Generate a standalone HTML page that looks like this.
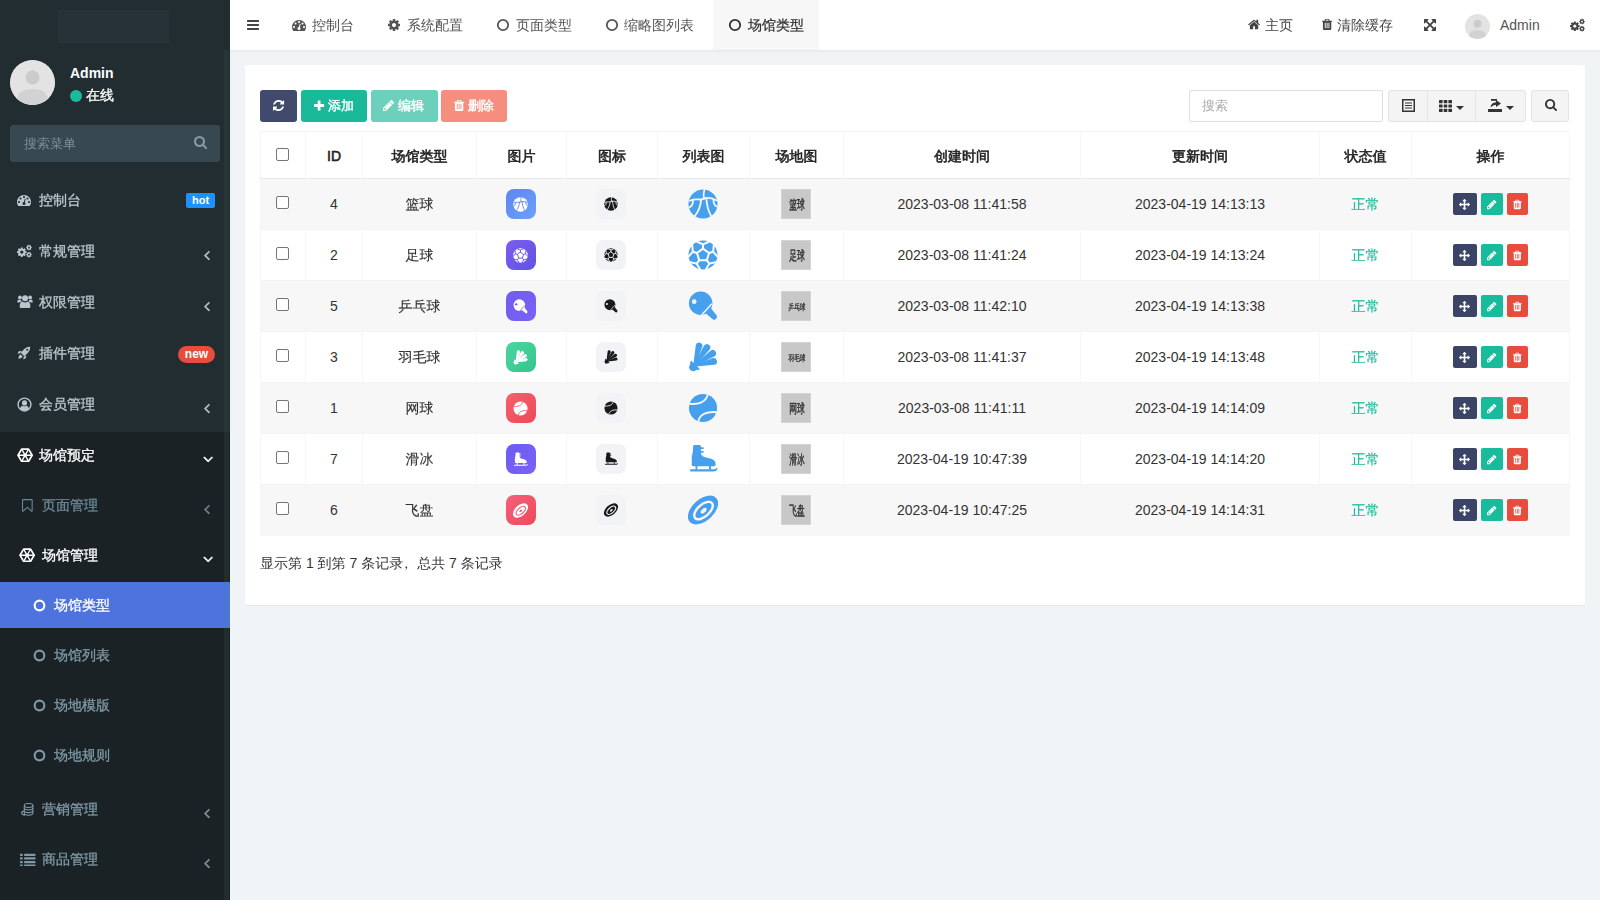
<!DOCTYPE html>
<html lang="zh-CN">
<head>
<meta charset="utf-8">
<title>场馆类型</title>
<style>
*{box-sizing:border-box;}
html,body{margin:0;padding:0;}
body{width:1600px;height:900px;overflow:hidden;background:#f1f4f6;font-family:"Liberation Sans","WenQuanYi Zen Hei","Noto Sans CJK SC",sans-serif;font-size:14px;color:#333;line-height:20px;position:relative;}
svg{display:block;}
/* ---------- sidebar ---------- */
#sidebar{position:absolute;left:0;top:0;width:230px;height:900px;background:#222d32;color:#b8c7ce;}
#logo{position:absolute;left:58px;top:10px;width:111px;height:33px;background:#263138;}
#avatar{position:absolute;left:10px;top:60px;width:45px;height:45px;border-radius:50%;background:#dcdcdc;overflow:hidden;}
#uname{position:absolute;left:70px;top:62.5px;color:#fff;font-weight:bold;font-size:14px;line-height:20px;}
#ustat{position:absolute;left:70px;top:85px;-webkit-text-stroke:.3px #fff;color:#fff;font-size:14px;line-height:20px;}
#ustat i{display:inline-block;width:12px;height:12px;border-radius:50%;background:#18bc9c;margin-right:4px;vertical-align:-1.5px;}
#sform{position:absolute;left:10px;top:125px;width:210px;height:37px;background:#374850;border-radius:3px;color:#7e8e96;font-size:13px;line-height:37px;padding-left:14px;}
#sform svg{position:absolute;right:13px;top:12px;}
.mi{position:absolute;left:0;width:230px;height:51px;color:#b8c7ce;font-size:14px;}
.mi .ic{position:absolute;left:17px;top:18px;width:16px;height:16px;}
.mi .tx{position:absolute;left:39px;top:15px;line-height:20px;white-space:nowrap;-webkit-text-stroke:.3px currentColor;}
.mi .ar{position:absolute;left:204px;top:21px;}
.mi.sub .ic{left:20px;}
.mi.sub .tx{left:42px;}
.mi.sub2 .ic{left:33px;}
.mi.sub2 .tx{left:54px;}
.mi.dim{color:#7f99a5;}
.mi.dim2{color:#6b8795;}
.mi.wh{color:#fff;}
#subbg{position:absolute;left:0;top:432px;width:230px;height:468px;background:#1a2226;}
#actbg{position:absolute;left:0;top:582px;width:230px;height:46px;background:#4e73df;}
.lab{position:absolute;font-size:11px;font-weight:bold;color:#fff;line-height:12px;text-align:center;}
/* ---------- header ---------- */
#header{position:absolute;left:230px;top:0;width:1370px;height:51px;background:#fff;border-bottom:1px solid #e6eaee;box-shadow:0 1px 2px rgba(0,0,0,.03);}
.tab{position:absolute;top:0;height:50px;line-height:50px;color:#555;font-size:14px;white-space:nowrap;}
.tab svg{position:absolute;top:18px;}
#tabact{position:absolute;left:482.5px;top:0;width:106px;height:50px;background:#f7f7f8;}
/* ---------- panel ---------- */
#panel{position:absolute;left:245px;top:65px;width:1340px;height:540px;background:#fff;border-radius:3px;box-shadow:0 1px 1px rgba(0,0,0,.05);}
.btn{position:absolute;top:90px;height:32px;border-radius:3px;color:#fff;-webkit-text-stroke:.4px #fff;font-size:13px;line-height:32px;white-space:nowrap;}
.btn svg{position:absolute;}
#search{position:absolute;left:1189px;top:90px;width:194px;height:32px;border:1px solid #dcdfe2;border-radius:2px;background:#fff;color:#aaa;font-size:13px;line-height:30px;padding-left:12px;}
.gbtn{position:absolute;top:90px;height:32px;background:#f4f4f4;border:1px solid #e3e3e3;}
.gbtn svg{position:absolute;}
/* table */
#tbl{position:absolute;left:260px;top:131px;width:1309px;border-collapse:collapse;table-layout:fixed;font-size:14px;color:#333;}
#tbl th,#tbl td{text-align:center;vertical-align:middle;padding:0;border-left:1px solid #f6f6f6;border-right:1px solid #f6f6f6;}
#tbl th{height:47px;padding-top:2px;font-weight:normal;-webkit-text-stroke:.55px #222;border-top:1px solid #f4f4f4;border-bottom:1px solid #e8e8e8;color:#222;}
#tbl td{height:51px;border-top:1px solid #f4f4f4;padding-top:0;}
#tbl tr.odd td{background:#f7f7f7;}
.cb{display:inline-block;width:13px;height:13px;border:1px solid #767676;border-radius:2px;background:#fff;vertical-align:middle;position:relative;top:-3px;left:-1px;}
#tbl th .cb{top:-3px;}
.ok{color:#18bc9c;}
.ops{display:inline-block;width:75px;height:22px;position:relative;vertical-align:middle;top:0;left:-.5px;}
.ops b{position:absolute;top:0;width:22px;height:22px;border-radius:2px;}
#foot{position:absolute;left:260px;top:553px;font-size:14px;line-height:20px;color:#333;}
.thumb{display:inline-block;width:30px;height:30px;vertical-align:middle;position:relative;overflow:hidden;left:-1px;top:0;}
.ph{position:absolute;left:-15px;top:5px;width:60px;height:20px;line-height:20px;text-align:center;color:#333;white-space:nowrap;}
.ops b svg{margin-left:auto;margin-right:auto;}
#rail{position:absolute;left:224px;top:50px;width:5px;height:850px;background:rgba(90,140,110,.10);}
#tbl td:nth-child(3),#tbl td.ok{-webkit-text-stroke:.15px currentColor;}
</style>
</head>
<body>
<div id="sidebar">
<div id="logo"></div>
<div id="avatar"><svg width="45" height="45" viewBox="0 0 45 45"><circle cx="22.5" cy="22.5" r="22.5" fill="#e3e3e3"/><circle cx="22.5" cy="17.5" r="7" fill="#cbcbcb"/><path d="M7 40 Q8 29 22.5 29 Q37 29 38 40 Q30 45 22.5 45 Q15 45 7 40Z" fill="#d2d2d2"/></svg></div>
<div id="uname">Admin</div>
<div id="ustat"><i></i>在线</div>
<div id="sform">搜索菜单<svg width="13" height="14" viewBox="0 0 1664 1792" style="overflow:visible;position:absolute;left:184px;top:11px"><path fill="#8a9aa2" stroke="#8a9aa2" stroke-width="0" stroke-linejoin="round" d="M1152 704q0-185-131.5-316.5t-316.5-131.5-316.5 131.5-131.5 316.5 131.5 316.5 316.5 131.5 316.5-131.5 131.5-316.5zm512 832q0 52-38 90t-90 38q-54 0-90-38l-343-342q-179 124-399 124-143 0-273.5-55.5t-225-150-150-225-55.5-273.5 55.5-273.5 150-225 225-150 273.5-55.5 273.5 55.5 225 150 150 225 55.5 273.5q0 220-124 399l343 343q37 37 37 90z"/></svg></div>
<div id="subbg"></div><div id="actbg"></div>
<div class="mi " style="top:175px"><span class="ic"><svg width="14" height="14" viewBox="0 0 1792 1792" style="overflow:visible;"><path fill="#b8c7ce" stroke="#b8c7ce" stroke-width="0" stroke-linejoin="round" d="M384 1152q0-53-37.5-90.5t-90.5-37.5-90.5 37.5-37.5 90.5 37.5 90.5 90.5 37.5 90.5-37.5 37.5-90.5zm192-448q0-53-37.5-90.5t-90.5-37.5-90.5 37.5-37.5 90.5 37.5 90.5 90.5 37.5 90.5-37.5 37.5-90.5zm428 481l101-382q6-26-7.5-48.5t-38.5-29.5-48 6.5-30 39.5l-101 382q-60 5-107 43.5t-63 98.5q-20 77 20 146t117 89 146-20 89-117q16-60-6-117t-72-91zm660-33q0-53-37.5-90.5t-90.5-37.5-90.5 37.5-37.5 90.5 37.5 90.5 90.5 37.5 90.5-37.5 37.5-90.5zm-640-640q0-53-37.5-90.5t-90.5-37.5-90.5 37.5-37.5 90.5 37.5 90.5 90.5 37.5 90.5-37.5 37.5-90.5zm448 192q0-53-37.5-90.5t-90.5-37.5-90.5 37.5-37.5 90.5 37.5 90.5 90.5 37.5 90.5-37.5 37.5-90.5zm320 448q0 261-141 483-19 29-54 29h-1402q-35 0-54-29-141-221-141-483 0-182 71-348t191-286 286-191 348-71 348 71 286 191 191 286 71 348z"/></svg></span><span class="tx">控制台</span><span class="lab" style="left:186px;top:18px;width:29px;height:15px;line-height:14px;background:#1e90ff;border-radius:2px">hot</span></div>
<div class="mi " style="top:226px"><span class="ic"><svg width="15" height="14" viewBox="0 0 1920 1792" style=""><g fill="#b8c7ce"><g transform="translate(0,330) scale(0.8)"><path d="M1024 896q0-106-75-181t-181-75-181 75-75 181 75 181 181 75 181-75 75-181zm512-109v222q0 12-8 23t-20 13l-185 28q-19 54-39 91 35 50 107 138 10 12 10 25t-9 23q-27 37-99 108t-94 71q-12 0-26-9l-138-108q-44 23-91 38-16 136-29 186-7 28-36 28h-222q-14 0-24.5-8.5t-11.5-21.5l-28-184q-49-16-90-37l-141 107q-10 9-25 9-14 0-25-11-126-114-165-168-7-10-7-23 0-12 8-23 15-21 51-66.5t54-70.5q-27-50-41-99l-183-27q-13-2-21-12.5t-8-23.5v-222q0-12 8-23t19-13l186-28q14-46 39-92-40-57-107-138-10-12-10-24 0-10 9-23 26-36 98.5-107.5t94.5-71.5q13 0 26 10l138 107q44-23 91-38 16-136 29-186 7-28 36-28h222q14 0 24.5 8.5t11.5 21.5l28 184q49 16 90 37l142-107q9-9 24-9 13 0 25 10 129 119 165 170 7 8 7 22 0 12-8 23-15 21-51 66.5t-54 70.5q26 50 41 98l183 28q13 2 21 12.5t8 23.5z"/></g><g transform="translate(1180,40) scale(0.46)"><path d="M1024 896q0-106-75-181t-181-75-181 75-75 181 75 181 181 75 181-75 75-181zm512-109v222q0 12-8 23t-20 13l-185 28q-19 54-39 91 35 50 107 138 10 12 10 25t-9 23q-27 37-99 108t-94 71q-12 0-26-9l-138-108q-44 23-91 38-16 136-29 186-7 28-36 28h-222q-14 0-24.5-8.5t-11.5-21.5l-28-184q-49-16-90-37l-141 107q-10 9-25 9-14 0-25-11-126-114-165-168-7-10-7-23 0-12 8-23 15-21 51-66.5t54-70.5q-27-50-41-99l-183-27q-13-2-21-12.5t-8-23.5v-222q0-12 8-23t19-13l186-28q14-46 39-92-40-57-107-138-10-12-10-24 0-10 9-23 26-36 98.5-107.5t94.5-71.5q13 0 26 10l138 107q44-23 91-38 16-136 29-186 7-28 36-28h222q14 0 24.5 8.5t11.5 21.5l28 184q49 16 90 37l142-107q9-9 24-9 13 0 25 10 129 119 165 170 7 8 7 22 0 12-8 23-15 21-51 66.5t-54 70.5q26 50 41 98l183 28q13 2 21 12.5t8 23.5z"/></g><g transform="translate(1180,960) scale(0.46)"><path d="M1024 896q0-106-75-181t-181-75-181 75-75 181 75 181 181 75 181-75 75-181zm512-109v222q0 12-8 23t-20 13l-185 28q-19 54-39 91 35 50 107 138 10 12 10 25t-9 23q-27 37-99 108t-94 71q-12 0-26-9l-138-108q-44 23-91 38-16 136-29 186-7 28-36 28h-222q-14 0-24.5-8.5t-11.5-21.5l-28-184q-49-16-90-37l-141 107q-10 9-25 9-14 0-25-11-126-114-165-168-7-10-7-23 0-12 8-23 15-21 51-66.5t54-70.5q-27-50-41-99l-183-27q-13-2-21-12.5t-8-23.5v-222q0-12 8-23t19-13l186-28q14-46 39-92-40-57-107-138-10-12-10-24 0-10 9-23 26-36 98.5-107.5t94.5-71.5q13 0 26 10l138 107q44-23 91-38 16-136 29-186 7-28 36-28h222q14 0 24.5 8.5t11.5 21.5l28 184q49 16 90 37l142-107q9-9 24-9 13 0 25 10 129 119 165 170 7 8 7 22 0 12-8 23-15 21-51 66.5t-54 70.5q26 50 41 98l183 28q13 2 21 12.5t8 23.5z"/></g></g></svg></span><span class="tx">常规管理</span><svg width="5.71" height="16" viewBox="0 0 640 1792" style="overflow:visible;position:absolute;left:204px;top:21px"><path fill="currentColor" stroke="currentColor" stroke-width="70" stroke-linejoin="round" d="M627 544q0 13-10 23l-393 393 393 393q10 10 10 23t-10 23l-50 50q-10 10-23 10t-23-10l-466-466q-10-10-10-23t10-23l466-466q10-10 23-10t23 10l50 50q10 10 10 23z"/></svg></div>
<div class="mi " style="top:277px"><span class="ic"><svg width="16.1" height="15" viewBox="0 0 30 28" style="margin-top:-1px"><g fill="#b8c7ce"><circle cx="15" cy="8" r="5.6"/><path d="M6.5 26 Q5 26 5 23.5 Q5 15 10 14 Q12.5 16 15 16 Q17.5 16 20 14 Q25 15 25 23.5 Q25 26 23.5 26 Z"/><circle cx="5.5" cy="6.5" r="3.6"/><path d="M0.5 15.5 Q0.5 10.5 3.5 10.2 Q5 11.4 7 11.2 Q7.6 13 9 14 Q5.5 15 4.6 16 L2 16 Q0.5 16 0.5 15.5Z"/><circle cx="24.5" cy="6.5" r="3.6"/><path d="M29.5 15.5 Q29.5 10.5 26.5 10.2 Q25 11.4 23 11.2 Q22.4 13 21 14 Q24.5 15 25.4 16 L28 16 Q29.5 16 29.5 15.5Z"/></g></svg></span><span class="tx">权限管理</span><svg width="5.71" height="16" viewBox="0 0 640 1792" style="overflow:visible;position:absolute;left:204px;top:21px"><path fill="currentColor" stroke="currentColor" stroke-width="70" stroke-linejoin="round" d="M627 544q0 13-10 23l-393 393 393 393q10 10 10 23t-10 23l-50 50q-10 10-23 10t-23-10l-466-466q-10-10-10-23t10-23l466-466q10-10 23-10t23 10l50 50q10 10 10 23z"/></svg></div>
<div class="mi " style="top:328px"><span class="ic"><svg width="14" height="14" viewBox="0 0 28 28" style=""><g fill="#b8c7ce"><path d="M26.5 1.5 Q27 8 22 13.5 L14.5 20.5 L7.5 13.5 L14.5 6 Q20 1 26.5 1.5 Z"/><path d="M9.5 9.5 L3.5 10.5 L0.8 15.5 L6.5 14.5 Z"/><path d="M18.5 18.5 L17.5 24.5 L12.5 27.2 L13.5 21.5 Z"/><path d="M6.6 16.4 L11.6 21.4 Q8 25.5 2.4 25.6 Q2.5 20 6.6 16.4Z"/></g><circle cx="20.5" cy="7.5" r="2.2" fill="#222d32"/></svg></span><span class="tx">插件管理</span><span class="lab" style="left:178px;top:18px;width:37px;height:17px;line-height:16px;background:#e74c3c;border-radius:9px;font-size:12px">new</span></div>
<div class="mi " style="top:379px"><span class="ic"><svg width="15" height="15" viewBox="0 0 28 28" style="margin-top:-.5px"><circle cx="14" cy="14" r="12" fill="none" stroke="#b8c7ce" stroke-width="2.6"/><circle cx="14" cy="11" r="4.8" fill="#b8c7ce"/><path d="M5.5 21.5 Q7 16.5 10.5 16.2 Q14 18.5 17.5 16.2 Q21 16.5 22.5 21.5 Q19 25.4 14 25.4 Q9 25.4 5.5 21.5Z" fill="#b8c7ce"/></svg></span><span class="tx">会员管理</span><svg width="5.71" height="16" viewBox="0 0 640 1792" style="overflow:visible;position:absolute;left:204px;top:21px"><path fill="currentColor" stroke="currentColor" stroke-width="70" stroke-linejoin="round" d="M627 544q0 13-10 23l-393 393 393 393q10 10 10 23t-10 23l-50 50q-10 10-23 10t-23-10l-466-466q-10-10-10-23t10-23l466-466q10-10 23-10t23 10l50 50q10 10 10 23z"/></svg></div>
<div class="mi wh" style="top:430px"><span class="ic"><svg width="16.2" height="14.5" viewBox="0 0 28 25" style="margin-top:-.5px"><g fill="none" stroke="#fff" stroke-width="3" stroke-linejoin="round"><path d="M1.8 12.5 L8 1.8 L20 1.8 L26.2 12.5 L20 23.2 L8 23.2 Z"/><path d="M1.8 12.5 H26.2 M8 1.8 L20 23.2 M20 1.8 L8 23.2" stroke-width="2.3"/></g><circle cx="14" cy="12.5" r="3.2" fill="#fff"/></svg></span><span class="tx">场馆预定</span><svg width="10.29" height="16" viewBox="0 0 1152 1792" style="overflow:visible;position:absolute;left:203px;top:20.5px"><path fill="currentColor" stroke="currentColor" stroke-width="70" stroke-linejoin="round" d="M1075 736q0 13-10 23l-466 466q-10 10-23 10t-23-10l-466-466q-10-10-10-23t10-23l50-50q10-10 23-10t23 10l393 393 393-393q10-10 23-10t23 10l50 50q10 10 10 23z"/></svg></div>
<div class="mi sub dim2" style="top:480px"><span class="ic"><svg width="10.71" height="15" viewBox="0 0 1280 1792" style="overflow:visible;margin:-.5px 0 0 2px"><path fill="#6b8795" stroke="#6b8795" stroke-width="0" stroke-linejoin="round" d="M1152 256h-1024v1242l423-406 89-85 89 85 423 406v-1242zm12-128q23 0 44 9 33 13 52.5 41t19.5 62v1289q0 34-19.5 62t-52.5 41q-19 8-44 8-48 0-83-32l-441-424-441 424q-36 33-83 33-23 0-44-9-33-13-52.5-41t-19.5-62v-1289q0-34 19.5-62t52.5-41q21-9 44-9h1048z"/></svg></span><span class="tx">页面管理</span><svg width="5.71" height="16" viewBox="0 0 640 1792" style="overflow:visible;position:absolute;left:204px;top:21px"><path fill="currentColor" stroke="currentColor" stroke-width="70" stroke-linejoin="round" d="M627 544q0 13-10 23l-393 393 393 393q10 10 10 23t-10 23l-50 50q-10 10-23 10t-23-10l-466-466q-10-10-10-23t10-23l466-466q10-10 23-10t23 10l50 50q10 10 10 23z"/></svg></div>
<div class="mi sub wh" style="top:530px"><span class="ic"><svg width="16.2" height="14.5" viewBox="0 0 28 25" style="margin:-.5px 0 0 -1px"><g fill="none" stroke="#fff" stroke-width="3" stroke-linejoin="round"><path d="M1.8 12.5 L8 1.8 L20 1.8 L26.2 12.5 L20 23.2 L8 23.2 Z"/><path d="M1.8 12.5 H26.2 M8 1.8 L20 23.2 M20 1.8 L8 23.2" stroke-width="2.3"/></g><circle cx="14" cy="12.5" r="3.2" fill="#fff"/></svg></span><span class="tx">场馆管理</span><svg width="10.29" height="16" viewBox="0 0 1152 1792" style="overflow:visible;position:absolute;left:203px;top:20.5px"><path fill="currentColor" stroke="currentColor" stroke-width="70" stroke-linejoin="round" d="M1075 736q0 13-10 23l-466 466q-10 10-23 10t-23-10l-466-466q-10-10-10-23t10-23l50-50q10-10 23-10t23 10l393 393 393-393q10-10 23-10t23 10l50 50q10 10 10 23z"/></svg></div>
<div class="mi sub2 wh" style="top:580px"><span class="ic"><svg width="13" height="13" viewBox="0 0 14 14" style="margin-top:.5px"><circle cx="7" cy="7" r="5.2" fill="none" stroke="#fff" stroke-width="2.3"/></svg></span><span class="tx">场馆类型</span></div>
<div class="mi sub2 dim" style="top:630px"><span class="ic"><svg width="13" height="13" viewBox="0 0 14 14" style="margin-top:.5px"><circle cx="7" cy="7" r="5.2" fill="none" stroke="#7f99a5" stroke-width="2.3"/></svg></span><span class="tx">场馆列表</span></div>
<div class="mi sub2 dim" style="top:680px"><span class="ic"><svg width="13" height="13" viewBox="0 0 14 14" style="margin-top:.5px"><circle cx="7" cy="7" r="5.2" fill="none" stroke="#7f99a5" stroke-width="2.3"/></svg></span><span class="tx">场地模版</span></div>
<div class="mi sub2 dim" style="top:730px"><span class="ic"><svg width="13" height="13" viewBox="0 0 14 14" style="margin-top:.5px"><circle cx="7" cy="7" r="5.2" fill="none" stroke="#7f99a5" stroke-width="2.3"/></svg></span><span class="tx">场地规则</span></div>
<div class="mi sub dim" style="top:784px"><span class="ic"><svg width="15" height="15" viewBox="0 0 28 28" style=""><g fill="none" stroke="#7f99a5" stroke-width="2"><ellipse cx="16" cy="6.5" rx="8" ry="3.6"/><path d="M8 6.5 V21 Q8 24.6 16 24.6 Q24 24.6 24 21 V6.5"/><path d="M8 11.3 Q8 14.9 16 14.9 Q24 14.9 24 11.3 M8 16.2 Q8 19.8 16 19.8 Q24 19.8 24 16.2"/><path d="M7.5 17 Q3 17.5 3 20.5 Q3 24 9.5 24.5"/></g></svg></span><span class="tx">营销管理</span><svg width="5.71" height="16" viewBox="0 0 640 1792" style="overflow:visible;position:absolute;left:204px;top:21px"><path fill="currentColor" stroke="currentColor" stroke-width="70" stroke-linejoin="round" d="M627 544q0 13-10 23l-393 393 393 393q10 10 10 23t-10 23l-50 50q-10 10-23 10t-23-10l-466-466q-10-10-10-23t10-23l466-466q10-10 23-10t23 10l50 50q10 10 10 23z"/></svg></div>
<div class="mi sub dim" style="top:834px"><span class="ic"><svg width="15.5" height="13.5" viewBox="0 0 32 28" style="margin-top:.5px"><g fill="#7f99a5"><rect x="0" y="1.5" width="5.5" height="4.5" rx=".6"/><rect x="8.5" y="1.5" width="23.5" height="4.5" rx=".6"/><rect x="0" y="9" width="5.5" height="4.5" rx=".6"/><rect x="8.5" y="9" width="23.5" height="4.5" rx=".6"/><rect x="0" y="16.5" width="5.5" height="4.5" rx=".6"/><rect x="8.5" y="16.5" width="23.5" height="4.5" rx=".6"/><rect x="0" y="24" width="5.5" height="4.5" rx=".6"/><rect x="8.5" y="24" width="23.5" height="4.5" rx=".6"/></g></svg></span><span class="tx">商品管理</span><svg width="5.71" height="16" viewBox="0 0 640 1792" style="overflow:visible;position:absolute;left:204px;top:21px"><path fill="currentColor" stroke="currentColor" stroke-width="70" stroke-linejoin="round" d="M627 544q0 13-10 23l-393 393 393 393q10 10 10 23t-10 23l-50 50q-10 10-23 10t-23-10l-466-466q-10-10-10-23t10-23l466-466q10-10 23-10t23 10l50 50q10 10 10 23z"/></svg></div>
<div id="rail"></div></div>
<div id="header">
<div id="tabact"></div>
<svg width="12" height="14" viewBox="0 0 1536 1792" style="overflow:visible;position:absolute;left:16.5px;top:18px"><path fill="#444" stroke="#444" stroke-width="0" stroke-linejoin="round" d="M1536 1344v128q0 26-19 45t-45 19h-1408q-26 0-45-19t-19-45v-128q0-26 19-45t45-19h1408q26 0 45 19t19 45zm0-512v128q0 26-19 45t-45 19h-1408q-26 0-45-19t-19-45v-128q0-26 19-45t45-19h1408q26 0 45 19t19 45zm0-512v128q0 26-19 45t-45 19h-1408q-26 0-45-19t-19-45v-128q0-26 19-45t45-19h1408q26 0 45 19t19 45z"/></svg><div class="tab" style="left:62px;color:#555"><svg width="14" height="14" viewBox="0 0 1792 1792" style="overflow:visible;left:0"><path fill="#555" stroke="#555" stroke-width="0" stroke-linejoin="round" d="M384 1152q0-53-37.5-90.5t-90.5-37.5-90.5 37.5-37.5 90.5 37.5 90.5 90.5 37.5 90.5-37.5 37.5-90.5zm192-448q0-53-37.5-90.5t-90.5-37.5-90.5 37.5-37.5 90.5 37.5 90.5 90.5 37.5 90.5-37.5 37.5-90.5zm428 481l101-382q6-26-7.5-48.5t-38.5-29.5-48 6.5-30 39.5l-101 382q-60 5-107 43.5t-63 98.5q-20 77 20 146t117 89 146-20 89-117q16-60-6-117t-72-91zm660-33q0-53-37.5-90.5t-90.5-37.5-90.5 37.5-37.5 90.5 37.5 90.5 90.5 37.5 90.5-37.5 37.5-90.5zm-640-640q0-53-37.5-90.5t-90.5-37.5-90.5 37.5-37.5 90.5 37.5 90.5 90.5 37.5 90.5-37.5 37.5-90.5zm448 192q0-53-37.5-90.5t-90.5-37.5-90.5 37.5-37.5 90.5 37.5 90.5 90.5 37.5 90.5-37.5 37.5-90.5zm320 448q0 261-141 483-19 29-54 29h-1402q-35 0-54-29-141-221-141-483 0-182 71-348t191-286 286-191 348-71 348 71 286 191 191 286 71 348z"/></svg><span style="margin-left:20px">控制台</span></div>
<div class="tab" style="left:158px;color:#555"><svg width="12" height="14" viewBox="0 0 1536 1792" style="overflow:visible;left:0"><path fill="#555" stroke="#555" stroke-width="0" stroke-linejoin="round" d="M1024 896q0-106-75-181t-181-75-181 75-75 181 75 181 181 75 181-75 75-181zm512-109v222q0 12-8 23t-20 13l-185 28q-19 54-39 91 35 50 107 138 10 12 10 25t-9 23q-27 37-99 108t-94 71q-12 0-26-9l-138-108q-44 23-91 38-16 136-29 186-7 28-36 28h-222q-14 0-24.5-8.5t-11.5-21.5l-28-184q-49-16-90-37l-141 107q-10 9-25 9-14 0-25-11-126-114-165-168-7-10-7-23 0-12 8-23 15-21 51-66.5t54-70.5q-27-50-41-99l-183-27q-13-2-21-12.5t-8-23.5v-222q0-12 8-23t19-13l186-28q14-46 39-92-40-57-107-138-10-12-10-24 0-10 9-23 26-36 98.5-107.5t94.5-71.5q13 0 26 10l138 107q44-23 91-38 16-136 29-186 7-28 36-28h222q14 0 24.5 8.5t11.5 21.5l28 184q49 16 90 37l142-107q9-9 24-9 13 0 25 10 129 119 165 170 7 8 7 22 0 12-8 23-15 21-51 66.5t-54 70.5q26 50 41 98l183 28q13 2 21 12.5t8 23.5z"/></svg><span style="margin-left:19px">系统配置</span></div>
<div class="tab" style="left:266px;color:#555"><svg width="14" height="14" viewBox="0 0 14 14" style="position:absolute;left:0;top:18px"><circle cx="7" cy="7" r="5.2" fill="none" stroke="#555" stroke-width="1.8"/></svg><span style="margin-left:20px">页面类型</span></div>
<div class="tab" style="left:375px;color:#555"><svg width="14" height="14" viewBox="0 0 14 14" style="position:absolute;left:0;top:18px"><circle cx="7" cy="7" r="5.2" fill="none" stroke="#555" stroke-width="1.8"/></svg><span style="margin-left:19px">缩略图列表</span></div>
<div class="tab" style="left:498px;color:#333;-webkit-text-stroke:.25px #333"><svg width="14" height="14" viewBox="0 0 14 14" style="position:absolute;left:0;top:18px"><circle cx="7" cy="7" r="5.2" fill="none" stroke="#333" stroke-width="1.8"/></svg><span style="margin-left:20px">场馆类型</span></div>
<div class="tab" style="left:1018px;color:#444"><svg width="12.07" height="13" viewBox="0 0 1664 1792" style="overflow:visible;left:0;top:18px"><path fill="#444" stroke="#444" stroke-width="0" stroke-linejoin="round" d="M1408 992v480q0 26-19 45t-45 19h-384v-384h-256v384h-384q-26 0-45-19t-19-45v-480q0-1 .5-3t.5-3l575-474 575 474q1 2 1 6zm223-69l-62 74q-8 9-21 11h-3q-13 0-21-7l-692-577-692 577q-12 8-24 7-13-2-21-11l-62-74q-8-10-7-23.5t11-21.5l719-599q32-26 76-26t76 26l244 204v-195q0-14 9-23t23-9h192q14 0 23 9t9 23v408l219 182q10 8 11 21.5t-7 23.5z"/></svg><span style="margin-left:17px">主页</span></div>
<div class="tab" style="left:1092px;color:#444"><svg width="10.21" height="13" viewBox="0 0 1408 1792" style="overflow:visible;left:0;top:18px"><path fill="#444" stroke="#444" stroke-width="0" stroke-linejoin="round" d="M512 1376v-704q0-14-9-23t-23-9h-64q-14 0-23 9t-9 23v704q0 14 9 23t23 9h64q14 0 23-9t9-23zm256 0v-704q0-14-9-23t-23-9h-64q-14 0-23 9t-9 23v704q0 14 9 23t23 9h64q14 0 23-9t9-23zm256 0v-704q0-14-9-23t-23-9h-64q-14 0-23 9t-9 23v704q0 14 9 23t23 9h64q14 0 23-9t9-23zm-544-992h448l-48-117q-7-9-17-11h-317q-10 2-17 11zm928 32v64q0 14-9 23t-23 9h-96v948q0 83-47 143.5t-113 60.5h-832q-66 0-113-58.5t-47-141.5v-952h-96q-14 0-23-9t-9-23v-64q0-14 9-23t23-9h309l70-167q15-37 54-63t79-26h320q40 0 79 26t54 63l70 167h309q14 0 23 9t9 23z"/></svg><span style="margin-left:15px">清除缓存</span></div>
<svg width="12" height="14" viewBox="0 0 1536 1792" style="overflow:visible;position:absolute;left:1194px;top:19px"><path fill="#444" stroke="#444" stroke-width="0" stroke-linejoin="round" d="M1283 413l-355 355 355 355 144-144q29-31 70-14 39 17 39 59v448q0 26-19 45t-45 19h-448q-42 0-59-40-17-39 14-69l144-144-355-355-355 355 144 144q31 30 14 69-17 40-59 40h-448q-26 0-45-19t-19-45v-448q0-42 40-59 39-17 69 14l144 144 355-355-355-355-144 144q-19 19-45 19-12 0-24-5-40-17-40-59v-448q0-26 19-45t45-19h448q42 0 59 40 17 39-14 69l-144 144 355 355 355-355-144-144q-31-30-14-69 17-40 59-40h448q26 0 45 19t19 45v448q0 42-39 59-13 5-25 5-26 0-45-19z"/></svg><svg width="25" height="25" viewBox="0 0 45 45" style="position:absolute;left:1235px;top:14px"><circle cx="22.5" cy="22.5" r="22.5" fill="#e3e3e3"/><circle cx="22.5" cy="17.5" r="7" fill="#cbcbcb"/><path d="M7 40 Q8 29 22.5 29 Q37 29 38 40 Q30 45 22.5 45 Q15 45 7 40Z" fill="#d2d2d2"/></svg><div class="tab" style="left:1270px;color:#555">Admin</div>
<svg width="15" height="14" viewBox="0 0 1920 1792" style="position:absolute;left:1340px;top:18px"><g fill="#444"><g transform="translate(0,330) scale(0.8)"><path d="M1024 896q0-106-75-181t-181-75-181 75-75 181 75 181 181 75 181-75 75-181zm512-109v222q0 12-8 23t-20 13l-185 28q-19 54-39 91 35 50 107 138 10 12 10 25t-9 23q-27 37-99 108t-94 71q-12 0-26-9l-138-108q-44 23-91 38-16 136-29 186-7 28-36 28h-222q-14 0-24.5-8.5t-11.5-21.5l-28-184q-49-16-90-37l-141 107q-10 9-25 9-14 0-25-11-126-114-165-168-7-10-7-23 0-12 8-23 15-21 51-66.5t54-70.5q-27-50-41-99l-183-27q-13-2-21-12.5t-8-23.5v-222q0-12 8-23t19-13l186-28q14-46 39-92-40-57-107-138-10-12-10-24 0-10 9-23 26-36 98.5-107.5t94.5-71.5q13 0 26 10l138 107q44-23 91-38 16-136 29-186 7-28 36-28h222q14 0 24.5 8.5t11.5 21.5l28 184q49 16 90 37l142-107q9-9 24-9 13 0 25 10 129 119 165 170 7 8 7 22 0 12-8 23-15 21-51 66.5t-54 70.5q26 50 41 98l183 28q13 2 21 12.5t8 23.5z"/></g><g transform="translate(1180,40) scale(0.46)"><path d="M1024 896q0-106-75-181t-181-75-181 75-75 181 75 181 181 75 181-75 75-181zm512-109v222q0 12-8 23t-20 13l-185 28q-19 54-39 91 35 50 107 138 10 12 10 25t-9 23q-27 37-99 108t-94 71q-12 0-26-9l-138-108q-44 23-91 38-16 136-29 186-7 28-36 28h-222q-14 0-24.5-8.5t-11.5-21.5l-28-184q-49-16-90-37l-141 107q-10 9-25 9-14 0-25-11-126-114-165-168-7-10-7-23 0-12 8-23 15-21 51-66.5t54-70.5q-27-50-41-99l-183-27q-13-2-21-12.5t-8-23.5v-222q0-12 8-23t19-13l186-28q14-46 39-92-40-57-107-138-10-12-10-24 0-10 9-23 26-36 98.5-107.5t94.5-71.5q13 0 26 10l138 107q44-23 91-38 16-136 29-186 7-28 36-28h222q14 0 24.5 8.5t11.5 21.5l28 184q49 16 90 37l142-107q9-9 24-9 13 0 25 10 129 119 165 170 7 8 7 22 0 12-8 23-15 21-51 66.5t-54 70.5q26 50 41 98l183 28q13 2 21 12.5t8 23.5z"/></g><g transform="translate(1180,960) scale(0.46)"><path d="M1024 896q0-106-75-181t-181-75-181 75-75 181 75 181 181 75 181-75 75-181zm512-109v222q0 12-8 23t-20 13l-185 28q-19 54-39 91 35 50 107 138 10 12 10 25t-9 23q-27 37-99 108t-94 71q-12 0-26-9l-138-108q-44 23-91 38-16 136-29 186-7 28-36 28h-222q-14 0-24.5-8.5t-11.5-21.5l-28-184q-49-16-90-37l-141 107q-10 9-25 9-14 0-25-11-126-114-165-168-7-10-7-23 0-12 8-23 15-21 51-66.5t54-70.5q-27-50-41-99l-183-27q-13-2-21-12.5t-8-23.5v-222q0-12 8-23t19-13l186-28q14-46 39-92-40-57-107-138-10-12-10-24 0-10 9-23 26-36 98.5-107.5t94.5-71.5q13 0 26 10l138 107q44-23 91-38 16-136 29-186 7-28 36-28h222q14 0 24.5 8.5t11.5 21.5l28 184q49 16 90 37l142-107q9-9 24-9 13 0 25 10 129 119 165 170 7 8 7 22 0 12-8 23-15 21-51 66.5t-54 70.5q26 50 41 98l183 28q13 2 21 12.5t8 23.5z"/></g></g></svg></div>
<div id="panel"></div>
<div class="btn" style="left:260px;width:37px;background:#414a6c"><svg width="11.14" height="13" viewBox="0 0 1536 1792" style="overflow:visible;left:13px;top:9px"><path fill="#fff" stroke="#fff" stroke-width="0" stroke-linejoin="round" d="M1511 1056q0 5-1 7-64 268-268 434.5t-478 166.5q-146 0-282.5-55t-243.5-157l-129 129q-19 19-45 19t-45-19-19-45v-448q0-26 19-45t45-19h448q26 0 45 19t19 45-19 45l-137 137q71 66 161 102t187 36q134 0 250-65t186-179q11-17 53-117 8-23 30-23h192q13 0 22.5 9.5t9.5 22.5zm25-800v448q0 26-19 45t-45 19h-448q-26 0-45-19t-19-45 19-45l138-138q-148-137-349-137-134 0-250 65t-186 179q-11 17-53 117-8 23-30 23h-199q-13 0-22.5-9.5t-9.5-22.5v-7q65-268 270-434.5t480-166.5q146 0 284 55.5t245 156.5l130-129q19-19 45-19t45 19 19 45z"/></svg></div>
<div class="btn" style="left:301px;width:66px;background:#1ab99a;padding-left:27px"><svg width="10.21" height="13" viewBox="0 0 1408 1792" style="overflow:visible;left:13px;top:9px"><path fill="#fff" stroke="#fff" stroke-width="0" stroke-linejoin="round" d="M1408 800v192q0 40-28 68t-68 28h-416v416q0 40-28 68t-68 28h-192q-40 0-68-28t-28-68v-416h-416q-40 0-68-28t-28-68v-192q0-40 28-68t68-28h416v-416q0-40 28-68t68-28h192q40 0 68 28t28 68v416h416q40 0 68 28t28 68z"/></svg>添加</div>
<div class="btn" style="left:371px;width:67px;background:#6dd0bc;padding-left:27px"><svg width="11.14" height="13" viewBox="0 0 1536 1792" style="overflow:visible;left:12px;top:9px"><path fill="#fff" stroke="#fff" stroke-width="0" stroke-linejoin="round" d="M363 1536l91-91-235-235-91 91v107h128v128h107zm523-928q0-22-22-22-10 0-17 7l-542 542q-7 7-7 17 0 22 22 22 10 0 17-7l542-542q7-7 7-17zm-54-192l416 416-832 832h-416v-416zm683 96q0 53-37 90l-166 166-416-416 166-165q36-38 90-38 53 0 91 38l235 234q37 39 37 91z"/></svg>编辑</div>
<div class="btn" style="left:441px;width:66px;background:#f68e80;padding-left:27px"><svg width="10.21" height="13" viewBox="0 0 1408 1792" style="overflow:visible;left:13px;top:9px"><path fill="#fff" stroke="#fff" stroke-width="0" stroke-linejoin="round" d="M512 1376v-704q0-14-9-23t-23-9h-64q-14 0-23 9t-9 23v704q0 14 9 23t23 9h64q14 0 23-9t9-23zm256 0v-704q0-14-9-23t-23-9h-64q-14 0-23 9t-9 23v704q0 14 9 23t23 9h64q14 0 23-9t9-23zm256 0v-704q0-14-9-23t-23-9h-64q-14 0-23 9t-9 23v704q0 14 9 23t23 9h64q14 0 23-9t9-23zm-544-992h448l-48-117q-7-9-17-11h-317q-10 2-17 11zm928 32v64q0 14-9 23t-23 9h-96v948q0 83-47 143.5t-113 60.5h-832q-66 0-113-58.5t-47-141.5v-952h-96q-14 0-23-9t-9-23v-64q0-14 9-23t23-9h309l70-167q15-37 54-63t79-26h320q40 0 79 26t54 63l70 167h309q14 0 23 9t9 23z"/></svg>删除</div>
<div id="search">搜索</div>
<div class="gbtn" style="left:1388px;width:40px;border-radius:3px 0 0 3px"><svg width="13" height="13" viewBox="0 0 13 13" style="left:13px;top:8px"><rect x=".75" y=".75" width="11.5" height="11.5" fill="none" stroke="#333" stroke-width="1.5"/><path d="M3 4h7M3 6.5h7M3 9h7" stroke="#333" stroke-width="1.1"/></svg></div>
<div class="gbtn" style="left:1427px;width:49px"><svg width="13" height="12" viewBox="0 0 13 12" style="left:11px;top:9px"><g fill="#333"><rect x="0" y="0" width="3.6" height="3.2" rx=".5"/><rect x="0" y="4.4" width="3.6" height="3.2" rx=".5"/><rect x="0" y="8.8" width="3.6" height="3.2" rx=".5"/><rect x="4.7" y="0" width="3.6" height="3.2" rx=".5"/><rect x="4.7" y="4.4" width="3.6" height="3.2" rx=".5"/><rect x="4.7" y="8.8" width="3.6" height="3.2" rx=".5"/><rect x="9.4" y="0" width="3.6" height="3.2" rx=".5"/><rect x="9.4" y="4.4" width="3.6" height="3.2" rx=".5"/><rect x="9.4" y="8.8" width="3.6" height="3.2" rx=".5"/></g></svg><svg width="8" height="4" viewBox="0 0 8 4" style="left:28px;top:15px"><path d="M0 0h8L4 4z" fill="#333"/></svg></div>
<div class="gbtn" style="left:1475px;width:51px;border-radius:0 3px 3px 0"><svg width="14" height="13" viewBox="0 0 14 13" style="left:12px;top:8px"><g fill="#333"><rect x="0" y="10" width="14" height="3" rx=".5"/><path d="M2.5 8.5 Q3 3.5 8 3.3 V1 L13 4.5 L8 8 V5.8 Q5 5.8 2.5 8.5Z"/><rect x="3" y="0" width="6" height="1.8"/></g></svg><svg width="8" height="4" viewBox="0 0 8 4" style="left:30px;top:15px"><path d="M0 0h8L4 4z" fill="#333"/></svg></div>
<div class="gbtn" style="left:1531px;width:38px;border-radius:3px"><svg width="12.07" height="13" viewBox="0 0 1664 1792" style="overflow:visible;left:12.5px;top:8px"><path fill="#333" stroke="#333" stroke-width="0" stroke-linejoin="round" d="M1152 704q0-185-131.5-316.5t-316.5-131.5-316.5 131.5-131.5 316.5 131.5 316.5 316.5 131.5 316.5-131.5 131.5-316.5zm512 832q0 52-38 90t-90 38q-54 0-90-38l-343-342q-179 124-399 124-143 0-273.5-55.5t-225-150-150-225-55.5-273.5 55.5-273.5 150-225 225-150 273.5-55.5 273.5 55.5 225 150 150 225 55.5 273.5q0 220-124 399l343 343q37 37 37 90z"/></svg></div>
<table id="tbl"><colgroup><col style="width:45px"><col style="width:57px"><col style="width:114px"><col style="width:90px"><col style="width:91px"><col style="width:92px"><col style="width:94px"><col style="width:237px"><col style="width:239px"><col style="width:92px"><col style="width:158px"></colgroup>
<tr><th><span class="cb"></span></th><th>ID</th><th>场馆类型</th><th>图片</th><th>图标</th><th>列表图</th><th>场地图</th><th>创建时间</th><th>更新时间</th><th>状态值</th><th>操作</th></tr>
<tr class="odd"><td><span class="cb"></span></td><td>4</td><td>篮球</td><td><span class="thumb" style="background:linear-gradient(135deg,#5b86f0,#6fa0fa);border-radius:8px"><svg width="15" height="15" viewBox="0 0 32 32" style="overflow:visible;margin:7.5px auto 0"><circle cx="16" cy="16" r="15.5" fill="#fff"/><g fill="none" stroke="#5b86f0" stroke-width="1.9" stroke-linecap="round"><path d="M2 12.5 C9 9.5 12 12.5 16.5 10.5 C21 8.5 25 9.5 30 12"/><path d="M14 11.3 C13.5 18 11 24 7.5 28.5"/><path d="M19.5 9.6 C20 17 22 24 24.5 28.5"/><path d="M17.5 1 C16.5 4 16.5 7 17 10.3"/><path d="M1.5 19.5 C4 18.5 5.5 16 5.2 12"/><path d="M30.5 18.5 C28 17.5 27 15 27.3 11"/></g></svg></span></td><td><span class="thumb" style="background:#f1f3f6;border-radius:7px"><svg width="14" height="14" viewBox="0 0 32 32" style="overflow:visible;margin:8px auto 0"><circle cx="16" cy="16" r="15.5" fill="#1a1a1a"/><g fill="none" stroke="#f1f3f6" stroke-width="1.9" stroke-linecap="round"><path d="M2 12.5 C9 9.5 12 12.5 16.5 10.5 C21 8.5 25 9.5 30 12"/><path d="M14 11.3 C13.5 18 11 24 7.5 28.5"/><path d="M19.5 9.6 C20 17 22 24 24.5 28.5"/><path d="M17.5 1 C16.5 4 16.5 7 17 10.3"/><path d="M1.5 19.5 C4 18.5 5.5 16 5.2 12"/><path d="M30.5 18.5 C28 17.5 27 15 27.3 11"/></g></svg></span></td><td><span class="thumb"><svg width="30" height="30" viewBox="0 0 32 32" style="overflow:visible;margin:0 auto"><circle cx="16" cy="16" r="15.5" fill="#47a0ee"/><g fill="none" stroke="#f7f7f7" stroke-width="1.9" stroke-linecap="round"><path d="M2 12.5 C9 9.5 12 12.5 16.5 10.5 C21 8.5 25 9.5 30 12"/><path d="M14 11.3 C13.5 18 11 24 7.5 28.5"/><path d="M19.5 9.6 C20 17 22 24 24.5 28.5"/><path d="M17.5 1 C16.5 4 16.5 7 17 10.3"/><path d="M1.5 19.5 C4 18.5 5.5 16 5.2 12"/><path d="M30.5 18.5 C28 17.5 27 15 27.3 11"/></g></svg></span></td><td><span class="thumb" style="background:#c8c8c8;border:1px solid #d4d4d4"><span class="ph" style="font-size:13px;transform:scale(.6,1);-webkit-text-stroke:.45px #333">篮球</span></span></td><td>2023-03-08 11:41:58</td><td>2023-04-19 14:13:13</td><td class="ok">正常</td><td><span class="ops"><b style="left:0;width:24px;background:#3b4466"><svg width="11" height="11" viewBox="0 0 1792 1792" style="overflow:visible;margin:5.5px auto 0"><path fill="#fff" stroke="#fff" stroke-width="0" stroke-linejoin="round" d="M1792 896q0 26-19 45l-256 256q-19 19-45 19t-45-19-19-45v-128h-384v384h128q26 0 45 19t19 45-19 45l-256 256q-19 19-45 19t-45-19l-256-256q-19-19-19-45t19-45 45-19h128v-384h-384v128q0 26-19 45t-45 19-45-19l-256-256q-19-19-19-45t19-45l256-256q19-19 45-19t45 19 19 45v128h384v-384h-128q-26 0-45-19t-19-45 19-45l256-256q19-19 45-19t45 19l256 256q19 19 19 45t-19 45-45 19h-128v384h384v-128q0-26 19-45t45-19 45 19l256 256q19 19 19 45z"/></svg></b><b style="left:28px;width:22px;background:#18bc9c"><svg width="9.43" height="11" viewBox="0 0 1536 1792" style="overflow:visible;margin:5.5px auto 0"><path fill="#fff" stroke="#fff" stroke-width="0" stroke-linejoin="round" d="M363 1536l91-91-235-235-91 91v107h128v128h107zm523-928q0-22-22-22-10 0-17 7l-542 542q-7 7-7 17 0 22 22 22 10 0 17-7l542-542q7-7 7-17zm-54-192l416 416-832 832h-416v-416zm683 96q0 53-37 90l-166 166-416-416 166-165q36-38 90-38 53 0 91 38l235 234q37 39 37 91z"/></svg></b><b style="left:54px;width:21px;background:#e74c3c"><svg width="8.64" height="11" viewBox="0 0 1408 1792" style="overflow:visible;margin:5.5px auto 0"><path fill="#fff" stroke="#fff" stroke-width="0" stroke-linejoin="round" d="M512 1376v-704q0-14-9-23t-23-9h-64q-14 0-23 9t-9 23v704q0 14 9 23t23 9h64q14 0 23-9t9-23zm256 0v-704q0-14-9-23t-23-9h-64q-14 0-23 9t-9 23v704q0 14 9 23t23 9h64q14 0 23-9t9-23zm256 0v-704q0-14-9-23t-23-9h-64q-14 0-23 9t-9 23v704q0 14 9 23t23 9h64q14 0 23-9t9-23zm-544-992h448l-48-117q-7-9-17-11h-317q-10 2-17 11zm928 32v64q0 14-9 23t-23 9h-96v948q0 83-47 143.5t-113 60.5h-832q-66 0-113-58.5t-47-141.5v-952h-96q-14 0-23-9t-9-23v-64q0-14 9-23t23-9h309l70-167q15-37 54-63t79-26h320q40 0 79 26t54 63l70 167h309q14 0 23 9t9 23z"/></svg></b></span></td></tr>
<tr class=""><td><span class="cb"></span></td><td>2</td><td>足球</td><td><span class="thumb" style="background:linear-gradient(135deg,#7d5cf0,#5e54e6);border-radius:8px"><svg width="15" height="15" viewBox="0 0 32 32" style="overflow:visible;margin:7.5px auto 0"><circle cx="16" cy="16" r="15.5" fill="#fff"/><g fill="none" stroke="#7d5cf0" stroke-width="2.1" stroke-linejoin="round" stroke-linecap="round"><polygon points="16,9.2 22.47,13.9 20,21.5 12,21.5 9.53,13.9"/><path d="M16 9.2L16 4.6"/><path d="M9.7 1.84L16 4.6L22.3 1.84"/><path d="M22.47 13.9L26.84 12.48"/><path d="M27.52 5.63L26.84 12.48L31.42 17.62"/><path d="M20 21.5L22.7 25.22"/><path d="M29.42 23.75L22.7 25.22L19.22 31.16"/><path d="M12 21.5L9.3 25.22"/><path d="M12.78 31.16L9.3 25.22L2.58 23.75"/><path d="M9.53 13.9L5.16 12.48"/><path d="M0.58 17.62L5.16 12.48L4.48 5.63"/></g></svg></span></td><td><span class="thumb" style="background:#f1f3f6;border-radius:7px"><svg width="14" height="14" viewBox="0 0 32 32" style="overflow:visible;margin:8px auto 0"><circle cx="16" cy="16" r="15.5" fill="#1a1a1a"/><g fill="none" stroke="#f1f3f6" stroke-width="2.1" stroke-linejoin="round" stroke-linecap="round"><polygon points="16,9.2 22.47,13.9 20,21.5 12,21.5 9.53,13.9"/><path d="M16 9.2L16 4.6"/><path d="M9.7 1.84L16 4.6L22.3 1.84"/><path d="M22.47 13.9L26.84 12.48"/><path d="M27.52 5.63L26.84 12.48L31.42 17.62"/><path d="M20 21.5L22.7 25.22"/><path d="M29.42 23.75L22.7 25.22L19.22 31.16"/><path d="M12 21.5L9.3 25.22"/><path d="M12.78 31.16L9.3 25.22L2.58 23.75"/><path d="M9.53 13.9L5.16 12.48"/><path d="M0.58 17.62L5.16 12.48L4.48 5.63"/></g></svg></span></td><td><span class="thumb"><svg width="30" height="30" viewBox="0 0 32 32" style="overflow:visible;margin:0 auto"><circle cx="16" cy="16" r="15.5" fill="#47a0ee"/><g fill="none" stroke="#fff" stroke-width="2.1" stroke-linejoin="round" stroke-linecap="round"><polygon points="16,9.2 22.47,13.9 20,21.5 12,21.5 9.53,13.9"/><path d="M16 9.2L16 4.6"/><path d="M9.7 1.84L16 4.6L22.3 1.84"/><path d="M22.47 13.9L26.84 12.48"/><path d="M27.52 5.63L26.84 12.48L31.42 17.62"/><path d="M20 21.5L22.7 25.22"/><path d="M29.42 23.75L22.7 25.22L19.22 31.16"/><path d="M12 21.5L9.3 25.22"/><path d="M12.78 31.16L9.3 25.22L2.58 23.75"/><path d="M9.53 13.9L5.16 12.48"/><path d="M0.58 17.62L5.16 12.48L4.48 5.63"/></g></svg></span></td><td><span class="thumb" style="background:#c8c8c8;border:1px solid #d4d4d4"><span class="ph" style="font-size:13px;transform:scale(.6,1);-webkit-text-stroke:.45px #333">足球</span></span></td><td>2023-03-08 11:41:24</td><td>2023-04-19 14:13:24</td><td class="ok">正常</td><td><span class="ops"><b style="left:0;width:24px;background:#3b4466"><svg width="11" height="11" viewBox="0 0 1792 1792" style="overflow:visible;margin:5.5px auto 0"><path fill="#fff" stroke="#fff" stroke-width="0" stroke-linejoin="round" d="M1792 896q0 26-19 45l-256 256q-19 19-45 19t-45-19-19-45v-128h-384v384h128q26 0 45 19t19 45-19 45l-256 256q-19 19-45 19t-45-19l-256-256q-19-19-19-45t19-45 45-19h128v-384h-384v128q0 26-19 45t-45 19-45-19l-256-256q-19-19-19-45t19-45l256-256q19-19 45-19t45 19 19 45v128h384v-384h-128q-26 0-45-19t-19-45 19-45l256-256q19-19 45-19t45 19l256 256q19 19 19 45t-19 45-45 19h-128v384h384v-128q0-26 19-45t45-19 45 19l256 256q19 19 19 45z"/></svg></b><b style="left:28px;width:22px;background:#18bc9c"><svg width="9.43" height="11" viewBox="0 0 1536 1792" style="overflow:visible;margin:5.5px auto 0"><path fill="#fff" stroke="#fff" stroke-width="0" stroke-linejoin="round" d="M363 1536l91-91-235-235-91 91v107h128v128h107zm523-928q0-22-22-22-10 0-17 7l-542 542q-7 7-7 17 0 22 22 22 10 0 17-7l542-542q7-7 7-17zm-54-192l416 416-832 832h-416v-416zm683 96q0 53-37 90l-166 166-416-416 166-165q36-38 90-38 53 0 91 38l235 234q37 39 37 91z"/></svg></b><b style="left:54px;width:21px;background:#e74c3c"><svg width="8.64" height="11" viewBox="0 0 1408 1792" style="overflow:visible;margin:5.5px auto 0"><path fill="#fff" stroke="#fff" stroke-width="0" stroke-linejoin="round" d="M512 1376v-704q0-14-9-23t-23-9h-64q-14 0-23 9t-9 23v704q0 14 9 23t23 9h64q14 0 23-9t9-23zm256 0v-704q0-14-9-23t-23-9h-64q-14 0-23 9t-9 23v704q0 14 9 23t23 9h64q14 0 23-9t9-23zm256 0v-704q0-14-9-23t-23-9h-64q-14 0-23 9t-9 23v704q0 14 9 23t23 9h64q14 0 23-9t9-23zm-544-992h448l-48-117q-7-9-17-11h-317q-10 2-17 11zm928 32v64q0 14-9 23t-23 9h-96v948q0 83-47 143.5t-113 60.5h-832q-66 0-113-58.5t-47-141.5v-952h-96q-14 0-23-9t-9-23v-64q0-14 9-23t23-9h309l70-167q15-37 54-63t79-26h320q40 0 79 26t54 63l70 167h309q14 0 23 9t9 23z"/></svg></b></span></td></tr>
<tr class="odd"><td><span class="cb"></span></td><td>5</td><td>乒乓球</td><td><span class="thumb" style="background:linear-gradient(135deg,#6f5cf0,#7a62f6);border-radius:8px"><svg width="15" height="15" viewBox="0 0 32 32" style="overflow:visible;margin:7.5px auto 0"><g fill="#fff"><circle cx="13.5" cy="13" r="12.5"/><path d="M17 22 L23 16.5 L30.6 26.2 Q31.6 27.8 30.2 29.2 L29.2 30.2 Q27.8 31.4 26.4 30 Z"/></g><path d="M14.5 25.6 L25.5 13.6" stroke="#6f5cf0" stroke-width="1.6" fill="none"/><circle cx="6.6" cy="11.4" r="2.5" fill="#6f5cf0"/></svg></span></td><td><span class="thumb" style="background:#f1f3f6;border-radius:7px"><svg width="14" height="14" viewBox="0 0 32 32" style="overflow:visible;margin:8px auto 0"><g fill="#1a1a1a"><circle cx="13.5" cy="13" r="12.5"/><path d="M17 22 L23 16.5 L30.6 26.2 Q31.6 27.8 30.2 29.2 L29.2 30.2 Q27.8 31.4 26.4 30 Z"/></g><path d="M14.5 25.6 L25.5 13.6" stroke="#f1f3f6" stroke-width="1.6" fill="none"/><circle cx="6.6" cy="11.4" r="2.5" fill="#f1f3f6"/></svg></span></td><td><span class="thumb"><svg width="30" height="30" viewBox="0 0 32 32" style="overflow:visible;margin:0 auto"><g fill="#47a0ee"><circle cx="13.5" cy="13" r="12.5"/><path d="M17 22 L23 16.5 L30.6 26.2 Q31.6 27.8 30.2 29.2 L29.2 30.2 Q27.8 31.4 26.4 30 Z"/></g><path d="M14.5 25.6 L25.5 13.6" stroke="#f7f7f7" stroke-width="1.6" fill="none"/><circle cx="6.6" cy="11.4" r="2.5" fill="#f7f7f7"/></svg></span></td><td><span class="thumb" style="background:#c8c8c8;border:1px solid #d4d4d4"><span class="ph" style="font-size:8.5px;transform:scale(.66,1);-webkit-text-stroke:.35px #333">乒乓球</span></span></td><td>2023-03-08 11:42:10</td><td>2023-04-19 14:13:38</td><td class="ok">正常</td><td><span class="ops"><b style="left:0;width:24px;background:#3b4466"><svg width="11" height="11" viewBox="0 0 1792 1792" style="overflow:visible;margin:5.5px auto 0"><path fill="#fff" stroke="#fff" stroke-width="0" stroke-linejoin="round" d="M1792 896q0 26-19 45l-256 256q-19 19-45 19t-45-19-19-45v-128h-384v384h128q26 0 45 19t19 45-19 45l-256 256q-19 19-45 19t-45-19l-256-256q-19-19-19-45t19-45 45-19h128v-384h-384v128q0 26-19 45t-45 19-45-19l-256-256q-19-19-19-45t19-45l256-256q19-19 45-19t45 19 19 45v128h384v-384h-128q-26 0-45-19t-19-45 19-45l256-256q19-19 45-19t45 19l256 256q19 19 19 45t-19 45-45 19h-128v384h384v-128q0-26 19-45t45-19 45 19l256 256q19 19 19 45z"/></svg></b><b style="left:28px;width:22px;background:#18bc9c"><svg width="9.43" height="11" viewBox="0 0 1536 1792" style="overflow:visible;margin:5.5px auto 0"><path fill="#fff" stroke="#fff" stroke-width="0" stroke-linejoin="round" d="M363 1536l91-91-235-235-91 91v107h128v128h107zm523-928q0-22-22-22-10 0-17 7l-542 542q-7 7-7 17 0 22 22 22 10 0 17-7l542-542q7-7 7-17zm-54-192l416 416-832 832h-416v-416zm683 96q0 53-37 90l-166 166-416-416 166-165q36-38 90-38 53 0 91 38l235 234q37 39 37 91z"/></svg></b><b style="left:54px;width:21px;background:#e74c3c"><svg width="8.64" height="11" viewBox="0 0 1408 1792" style="overflow:visible;margin:5.5px auto 0"><path fill="#fff" stroke="#fff" stroke-width="0" stroke-linejoin="round" d="M512 1376v-704q0-14-9-23t-23-9h-64q-14 0-23 9t-9 23v704q0 14 9 23t23 9h64q14 0 23-9t9-23zm256 0v-704q0-14-9-23t-23-9h-64q-14 0-23 9t-9 23v704q0 14 9 23t23 9h64q14 0 23-9t9-23zm256 0v-704q0-14-9-23t-23-9h-64q-14 0-23 9t-9 23v704q0 14 9 23t23 9h64q14 0 23-9t9-23zm-544-992h448l-48-117q-7-9-17-11h-317q-10 2-17 11zm928 32v64q0 14-9 23t-23 9h-96v948q0 83-47 143.5t-113 60.5h-832q-66 0-113-58.5t-47-141.5v-952h-96q-14 0-23-9t-9-23v-64q0-14 9-23t23-9h309l70-167q15-37 54-63t79-26h320q40 0 79 26t54 63l70 167h309q14 0 23 9t9 23z"/></svg></b></span></td></tr>
<tr class=""><td><span class="cb"></span></td><td>3</td><td>羽毛球</td><td><span class="thumb" style="background:linear-gradient(135deg,#4cd6a0,#35c48c);border-radius:8px"><svg width="15" height="15" viewBox="0 0 32 32" style="overflow:visible;margin:7.5px auto 0"><g fill="#fff"><circle cx="5.6" cy="26.8" r="4.4"/><g transform="translate(6.5,25.5) rotate(-76)"><path d="M2 -1.2 L21.9 -3.6 Q25.5 -3.6 25.5 0 Q25.5 3.6 21.9 3.6 L2 1.2 Z"/></g><g transform="translate(6.5,25.5) rotate(-55)"><path d="M2 -1.2 L23.9 -3.6 Q27.5 -3.6 27.5 0 Q27.5 3.6 23.9 3.6 L2 1.2 Z"/></g><g transform="translate(6.5,25.5) rotate(-34)"><path d="M2 -1.2 L23.9 -3.6 Q27.5 -3.6 27.5 0 Q27.5 3.6 23.9 3.6 L2 1.2 Z"/></g><g transform="translate(6.5,25.5) rotate(-13)"><path d="M2 -1.2 L21.4 -3.6 Q25 -3.6 25 0 Q25 3.6 21.4 3.6 L2 1.2 Z"/></g><path d="M3.2 19.8 L12.8 29 L9.5 30 L2 23 Z"/></g></svg></span></td><td><span class="thumb" style="background:#f1f3f6;border-radius:7px"><svg width="14" height="14" viewBox="0 0 32 32" style="overflow:visible;margin:8px auto 0"><g fill="#1a1a1a"><circle cx="5.6" cy="26.8" r="4.4"/><g transform="translate(6.5,25.5) rotate(-76)"><path d="M2 -1.2 L21.9 -3.6 Q25.5 -3.6 25.5 0 Q25.5 3.6 21.9 3.6 L2 1.2 Z"/></g><g transform="translate(6.5,25.5) rotate(-55)"><path d="M2 -1.2 L23.9 -3.6 Q27.5 -3.6 27.5 0 Q27.5 3.6 23.9 3.6 L2 1.2 Z"/></g><g transform="translate(6.5,25.5) rotate(-34)"><path d="M2 -1.2 L23.9 -3.6 Q27.5 -3.6 27.5 0 Q27.5 3.6 23.9 3.6 L2 1.2 Z"/></g><g transform="translate(6.5,25.5) rotate(-13)"><path d="M2 -1.2 L21.4 -3.6 Q25 -3.6 25 0 Q25 3.6 21.4 3.6 L2 1.2 Z"/></g><path d="M3.2 19.8 L12.8 29 L9.5 30 L2 23 Z"/></g></svg></span></td><td><span class="thumb"><svg width="30" height="30" viewBox="0 0 32 32" style="overflow:visible;margin:0 auto"><g fill="#47a0ee"><circle cx="5.6" cy="26.8" r="4.4"/><g transform="translate(6.5,25.5) rotate(-76)"><path d="M2 -1.2 L21.9 -3.6 Q25.5 -3.6 25.5 0 Q25.5 3.6 21.9 3.6 L2 1.2 Z"/></g><g transform="translate(6.5,25.5) rotate(-55)"><path d="M2 -1.2 L23.9 -3.6 Q27.5 -3.6 27.5 0 Q27.5 3.6 23.9 3.6 L2 1.2 Z"/></g><g transform="translate(6.5,25.5) rotate(-34)"><path d="M2 -1.2 L23.9 -3.6 Q27.5 -3.6 27.5 0 Q27.5 3.6 23.9 3.6 L2 1.2 Z"/></g><g transform="translate(6.5,25.5) rotate(-13)"><path d="M2 -1.2 L21.4 -3.6 Q25 -3.6 25 0 Q25 3.6 21.4 3.6 L2 1.2 Z"/></g><path d="M3.2 19.8 L12.8 29 L9.5 30 L2 23 Z"/></g></svg></span></td><td><span class="thumb" style="background:#c8c8c8;border:1px solid #d4d4d4"><span class="ph" style="font-size:8.5px;transform:scale(.66,1);-webkit-text-stroke:.35px #333">羽毛球</span></span></td><td>2023-03-08 11:41:37</td><td>2023-04-19 14:13:48</td><td class="ok">正常</td><td><span class="ops"><b style="left:0;width:24px;background:#3b4466"><svg width="11" height="11" viewBox="0 0 1792 1792" style="overflow:visible;margin:5.5px auto 0"><path fill="#fff" stroke="#fff" stroke-width="0" stroke-linejoin="round" d="M1792 896q0 26-19 45l-256 256q-19 19-45 19t-45-19-19-45v-128h-384v384h128q26 0 45 19t19 45-19 45l-256 256q-19 19-45 19t-45-19l-256-256q-19-19-19-45t19-45 45-19h128v-384h-384v128q0 26-19 45t-45 19-45-19l-256-256q-19-19-19-45t19-45l256-256q19-19 45-19t45 19 19 45v128h384v-384h-128q-26 0-45-19t-19-45 19-45l256-256q19-19 45-19t45 19l256 256q19 19 19 45t-19 45-45 19h-128v384h384v-128q0-26 19-45t45-19 45 19l256 256q19 19 19 45z"/></svg></b><b style="left:28px;width:22px;background:#18bc9c"><svg width="9.43" height="11" viewBox="0 0 1536 1792" style="overflow:visible;margin:5.5px auto 0"><path fill="#fff" stroke="#fff" stroke-width="0" stroke-linejoin="round" d="M363 1536l91-91-235-235-91 91v107h128v128h107zm523-928q0-22-22-22-10 0-17 7l-542 542q-7 7-7 17 0 22 22 22 10 0 17-7l542-542q7-7 7-17zm-54-192l416 416-832 832h-416v-416zm683 96q0 53-37 90l-166 166-416-416 166-165q36-38 90-38 53 0 91 38l235 234q37 39 37 91z"/></svg></b><b style="left:54px;width:21px;background:#e74c3c"><svg width="8.64" height="11" viewBox="0 0 1408 1792" style="overflow:visible;margin:5.5px auto 0"><path fill="#fff" stroke="#fff" stroke-width="0" stroke-linejoin="round" d="M512 1376v-704q0-14-9-23t-23-9h-64q-14 0-23 9t-9 23v704q0 14 9 23t23 9h64q14 0 23-9t9-23zm256 0v-704q0-14-9-23t-23-9h-64q-14 0-23 9t-9 23v704q0 14 9 23t23 9h64q14 0 23-9t9-23zm256 0v-704q0-14-9-23t-23-9h-64q-14 0-23 9t-9 23v704q0 14 9 23t23 9h64q14 0 23-9t9-23zm-544-992h448l-48-117q-7-9-17-11h-317q-10 2-17 11zm928 32v64q0 14-9 23t-23 9h-96v948q0 83-47 143.5t-113 60.5h-832q-66 0-113-58.5t-47-141.5v-952h-96q-14 0-23-9t-9-23v-64q0-14 9-23t23-9h309l70-167q15-37 54-63t79-26h320q40 0 79 26t54 63l70 167h309q14 0 23 9t9 23z"/></svg></b></span></td></tr>
<tr class="odd"><td><span class="cb"></span></td><td>1</td><td>网球</td><td><span class="thumb" style="background:linear-gradient(135deg,#f4606c,#ee4a5a);border-radius:8px"><svg width="15" height="15" viewBox="0 0 32 32" style="overflow:visible;margin:7.5px auto 0"><circle cx="16" cy="16" r="15" fill="#fff"/><g fill="none" stroke="#f4606c" stroke-width="2" stroke-linecap="round"><path d="M2 11.5 C11 12.5 19.5 9.5 21 1.8"/><path d="M30 20.5 C21 19.5 12.5 22.5 11 30.2"/></g></svg></span></td><td><span class="thumb" style="background:#f1f3f6;border-radius:7px"><svg width="14" height="14" viewBox="0 0 32 32" style="overflow:visible;margin:8px auto 0"><circle cx="16" cy="16" r="15" fill="#1a1a1a"/><g fill="none" stroke="#f1f3f6" stroke-width="2" stroke-linecap="round"><path d="M2 11.5 C11 12.5 19.5 9.5 21 1.8"/><path d="M30 20.5 C21 19.5 12.5 22.5 11 30.2"/></g></svg></span></td><td><span class="thumb"><svg width="30" height="30" viewBox="0 0 32 32" style="overflow:visible;margin:0 auto"><circle cx="16" cy="16" r="15" fill="#47a0ee"/><g fill="none" stroke="#f7f7f7" stroke-width="2" stroke-linecap="round"><path d="M2 11.5 C11 12.5 19.5 9.5 21 1.8"/><path d="M30 20.5 C21 19.5 12.5 22.5 11 30.2"/></g></svg></span></td><td><span class="thumb" style="background:#c8c8c8;border:1px solid #d4d4d4"><span class="ph" style="font-size:13px;transform:scale(.6,1);-webkit-text-stroke:.45px #333">网球</span></span></td><td>2023-03-08 11:41:11</td><td>2023-04-19 14:14:09</td><td class="ok">正常</td><td><span class="ops"><b style="left:0;width:24px;background:#3b4466"><svg width="11" height="11" viewBox="0 0 1792 1792" style="overflow:visible;margin:5.5px auto 0"><path fill="#fff" stroke="#fff" stroke-width="0" stroke-linejoin="round" d="M1792 896q0 26-19 45l-256 256q-19 19-45 19t-45-19-19-45v-128h-384v384h128q26 0 45 19t19 45-19 45l-256 256q-19 19-45 19t-45-19l-256-256q-19-19-19-45t19-45 45-19h128v-384h-384v128q0 26-19 45t-45 19-45-19l-256-256q-19-19-19-45t19-45l256-256q19-19 45-19t45 19 19 45v128h384v-384h-128q-26 0-45-19t-19-45 19-45l256-256q19-19 45-19t45 19l256 256q19 19 19 45t-19 45-45 19h-128v384h384v-128q0-26 19-45t45-19 45 19l256 256q19 19 19 45z"/></svg></b><b style="left:28px;width:22px;background:#18bc9c"><svg width="9.43" height="11" viewBox="0 0 1536 1792" style="overflow:visible;margin:5.5px auto 0"><path fill="#fff" stroke="#fff" stroke-width="0" stroke-linejoin="round" d="M363 1536l91-91-235-235-91 91v107h128v128h107zm523-928q0-22-22-22-10 0-17 7l-542 542q-7 7-7 17 0 22 22 22 10 0 17-7l542-542q7-7 7-17zm-54-192l416 416-832 832h-416v-416zm683 96q0 53-37 90l-166 166-416-416 166-165q36-38 90-38 53 0 91 38l235 234q37 39 37 91z"/></svg></b><b style="left:54px;width:21px;background:#e74c3c"><svg width="8.64" height="11" viewBox="0 0 1408 1792" style="overflow:visible;margin:5.5px auto 0"><path fill="#fff" stroke="#fff" stroke-width="0" stroke-linejoin="round" d="M512 1376v-704q0-14-9-23t-23-9h-64q-14 0-23 9t-9 23v704q0 14 9 23t23 9h64q14 0 23-9t9-23zm256 0v-704q0-14-9-23t-23-9h-64q-14 0-23 9t-9 23v704q0 14 9 23t23 9h64q14 0 23-9t9-23zm256 0v-704q0-14-9-23t-23-9h-64q-14 0-23 9t-9 23v704q0 14 9 23t23 9h64q14 0 23-9t9-23zm-544-992h448l-48-117q-7-9-17-11h-317q-10 2-17 11zm928 32v64q0 14-9 23t-23 9h-96v948q0 83-47 143.5t-113 60.5h-832q-66 0-113-58.5t-47-141.5v-952h-96q-14 0-23-9t-9-23v-64q0-14 9-23t23-9h309l70-167q15-37 54-63t79-26h320q40 0 79 26t54 63l70 167h309q14 0 23 9t9 23z"/></svg></b></span></td></tr>
<tr class=""><td><span class="cb"></span></td><td>7</td><td>滑冰</td><td><span class="thumb" style="background:linear-gradient(135deg,#6c5cf2,#7a62f6);border-radius:8px"><svg width="15" height="15" viewBox="0 0 32 32" style="overflow:visible;margin:7.5px auto 0"><g fill="#fff"><path d="M5.5 2.5 Q5.5 1 7 1 L12.2 1 Q13.8 1 13.8 2.6 L13.8 3.4 L15.8 3.4 Q16.8 3.4 16.8 4.4 Q16.8 5.4 15.8 5.4 L13.8 5.4 L13.8 7.4 L15.8 7.4 Q16.8 7.4 16.8 8.4 Q16.8 9.4 15.8 9.4 L13.8 9.4 Q14 12.6 17.4 13.8 L24.6 15.8 Q29.4 17.2 29.4 21.4 L29.4 22 Q29.4 23.6 27.8 23.6 L5.6 23.6 Q4 23.6 4 22 L4 13.5 Q5.5 8.6 5.5 2.5 Z"/><path d="M8 23.5 h2 v4 h-2z M22.4 23.5 h2 v4 h-2z"/><path d="M3.2 27 L28 27 Q29.6 27 30.2 25.8 Q30.8 25 31.4 25.6 Q31.8 26.2 31.2 27.2 Q30 29.4 27.6 29.4 L3.2 29.4 Q2 29.4 2 28.2 Q2 27 3.2 27 Z"/></g></svg></span></td><td><span class="thumb" style="background:#f1f3f6;border-radius:7px"><svg width="14" height="14" viewBox="0 0 32 32" style="overflow:visible;margin:8px auto 0"><g fill="#1a1a1a"><path d="M5.5 2.5 Q5.5 1 7 1 L12.2 1 Q13.8 1 13.8 2.6 L13.8 3.4 L15.8 3.4 Q16.8 3.4 16.8 4.4 Q16.8 5.4 15.8 5.4 L13.8 5.4 L13.8 7.4 L15.8 7.4 Q16.8 7.4 16.8 8.4 Q16.8 9.4 15.8 9.4 L13.8 9.4 Q14 12.6 17.4 13.8 L24.6 15.8 Q29.4 17.2 29.4 21.4 L29.4 22 Q29.4 23.6 27.8 23.6 L5.6 23.6 Q4 23.6 4 22 L4 13.5 Q5.5 8.6 5.5 2.5 Z"/><path d="M8 23.5 h2 v4 h-2z M22.4 23.5 h2 v4 h-2z"/><path d="M3.2 27 L28 27 Q29.6 27 30.2 25.8 Q30.8 25 31.4 25.6 Q31.8 26.2 31.2 27.2 Q30 29.4 27.6 29.4 L3.2 29.4 Q2 29.4 2 28.2 Q2 27 3.2 27 Z"/></g></svg></span></td><td><span class="thumb"><svg width="30" height="30" viewBox="0 0 32 32" style="overflow:visible;margin:0 auto"><g fill="#47a0ee"><path d="M5.5 2.5 Q5.5 1 7 1 L12.2 1 Q13.8 1 13.8 2.6 L13.8 3.4 L15.8 3.4 Q16.8 3.4 16.8 4.4 Q16.8 5.4 15.8 5.4 L13.8 5.4 L13.8 7.4 L15.8 7.4 Q16.8 7.4 16.8 8.4 Q16.8 9.4 15.8 9.4 L13.8 9.4 Q14 12.6 17.4 13.8 L24.6 15.8 Q29.4 17.2 29.4 21.4 L29.4 22 Q29.4 23.6 27.8 23.6 L5.6 23.6 Q4 23.6 4 22 L4 13.5 Q5.5 8.6 5.5 2.5 Z"/><path d="M8 23.5 h2 v4 h-2z M22.4 23.5 h2 v4 h-2z"/><path d="M3.2 27 L28 27 Q29.6 27 30.2 25.8 Q30.8 25 31.4 25.6 Q31.8 26.2 31.2 27.2 Q30 29.4 27.6 29.4 L3.2 29.4 Q2 29.4 2 28.2 Q2 27 3.2 27 Z"/></g></svg></span></td><td><span class="thumb" style="background:#c8c8c8;border:1px solid #d4d4d4"><span class="ph" style="font-size:13px;transform:scale(.6,1);-webkit-text-stroke:.45px #333">滑冰</span></span></td><td>2023-04-19 10:47:39</td><td>2023-04-19 14:14:20</td><td class="ok">正常</td><td><span class="ops"><b style="left:0;width:24px;background:#3b4466"><svg width="11" height="11" viewBox="0 0 1792 1792" style="overflow:visible;margin:5.5px auto 0"><path fill="#fff" stroke="#fff" stroke-width="0" stroke-linejoin="round" d="M1792 896q0 26-19 45l-256 256q-19 19-45 19t-45-19-19-45v-128h-384v384h128q26 0 45 19t19 45-19 45l-256 256q-19 19-45 19t-45-19l-256-256q-19-19-19-45t19-45 45-19h128v-384h-384v128q0 26-19 45t-45 19-45-19l-256-256q-19-19-19-45t19-45l256-256q19-19 45-19t45 19 19 45v128h384v-384h-128q-26 0-45-19t-19-45 19-45l256-256q19-19 45-19t45 19l256 256q19 19 19 45t-19 45-45 19h-128v384h384v-128q0-26 19-45t45-19 45 19l256 256q19 19 19 45z"/></svg></b><b style="left:28px;width:22px;background:#18bc9c"><svg width="9.43" height="11" viewBox="0 0 1536 1792" style="overflow:visible;margin:5.5px auto 0"><path fill="#fff" stroke="#fff" stroke-width="0" stroke-linejoin="round" d="M363 1536l91-91-235-235-91 91v107h128v128h107zm523-928q0-22-22-22-10 0-17 7l-542 542q-7 7-7 17 0 22 22 22 10 0 17-7l542-542q7-7 7-17zm-54-192l416 416-832 832h-416v-416zm683 96q0 53-37 90l-166 166-416-416 166-165q36-38 90-38 53 0 91 38l235 234q37 39 37 91z"/></svg></b><b style="left:54px;width:21px;background:#e74c3c"><svg width="8.64" height="11" viewBox="0 0 1408 1792" style="overflow:visible;margin:5.5px auto 0"><path fill="#fff" stroke="#fff" stroke-width="0" stroke-linejoin="round" d="M512 1376v-704q0-14-9-23t-23-9h-64q-14 0-23 9t-9 23v704q0 14 9 23t23 9h64q14 0 23-9t9-23zm256 0v-704q0-14-9-23t-23-9h-64q-14 0-23 9t-9 23v704q0 14 9 23t23 9h64q14 0 23-9t9-23zm256 0v-704q0-14-9-23t-23-9h-64q-14 0-23 9t-9 23v704q0 14 9 23t23 9h64q14 0 23-9t9-23zm-544-992h448l-48-117q-7-9-17-11h-317q-10 2-17 11zm928 32v64q0 14-9 23t-23 9h-96v948q0 83-47 143.5t-113 60.5h-832q-66 0-113-58.5t-47-141.5v-952h-96q-14 0-23-9t-9-23v-64q0-14 9-23t23-9h309l70-167q15-37 54-63t79-26h320q40 0 79 26t54 63l70 167h309q14 0 23 9t9 23z"/></svg></b></span></td></tr>
<tr class="odd"><td><span class="cb"></span></td><td>6</td><td>飞盘</td><td><span class="thumb" style="background:linear-gradient(135deg,#f4607a,#ee4a5a);border-radius:8px"><svg width="15" height="15" viewBox="0 0 32 32" style="overflow:visible;margin:7.5px auto 0"><g transform="rotate(-42 16 16)"><ellipse cx="16" cy="16" rx="19" ry="11.5" fill="#fff"/><ellipse cx="16" cy="16.8" rx="12" ry="6.3" fill="none" stroke="#f4607a" stroke-width="2.6"/><ellipse cx="16" cy="17" rx="3.8" ry="2.1" fill="#f4607a"/></g></svg></span></td><td><span class="thumb" style="background:#f1f3f6;border-radius:7px"><svg width="14" height="14" viewBox="0 0 32 32" style="overflow:visible;margin:8px auto 0"><g transform="rotate(-42 16 16)"><ellipse cx="16" cy="16" rx="19" ry="11.5" fill="#1a1a1a"/><ellipse cx="16" cy="16.8" rx="12" ry="6.3" fill="none" stroke="#f1f3f6" stroke-width="2.6"/><ellipse cx="16" cy="17" rx="3.8" ry="2.1" fill="#f1f3f6"/></g></svg></span></td><td><span class="thumb"><svg width="30" height="30" viewBox="0 0 32 32" style="overflow:visible;margin:0 auto"><g transform="rotate(-42 16 16)"><ellipse cx="16" cy="16" rx="19" ry="11.5" fill="#47a0ee"/><ellipse cx="16" cy="16.8" rx="12" ry="6.3" fill="none" stroke="#f7f7f7" stroke-width="2.6"/><ellipse cx="16" cy="17" rx="3.8" ry="2.1" fill="#f7f7f7"/></g></svg></span></td><td><span class="thumb" style="background:#c8c8c8;border:1px solid #d4d4d4"><span class="ph" style="font-size:13px;transform:scale(.6,1);-webkit-text-stroke:.45px #333">飞盘</span></span></td><td>2023-04-19 10:47:25</td><td>2023-04-19 14:14:31</td><td class="ok">正常</td><td><span class="ops"><b style="left:0;width:24px;background:#3b4466"><svg width="11" height="11" viewBox="0 0 1792 1792" style="overflow:visible;margin:5.5px auto 0"><path fill="#fff" stroke="#fff" stroke-width="0" stroke-linejoin="round" d="M1792 896q0 26-19 45l-256 256q-19 19-45 19t-45-19-19-45v-128h-384v384h128q26 0 45 19t19 45-19 45l-256 256q-19 19-45 19t-45-19l-256-256q-19-19-19-45t19-45 45-19h128v-384h-384v128q0 26-19 45t-45 19-45-19l-256-256q-19-19-19-45t19-45l256-256q19-19 45-19t45 19 19 45v128h384v-384h-128q-26 0-45-19t-19-45 19-45l256-256q19-19 45-19t45 19l256 256q19 19 19 45t-19 45-45 19h-128v384h384v-128q0-26 19-45t45-19 45 19l256 256q19 19 19 45z"/></svg></b><b style="left:28px;width:22px;background:#18bc9c"><svg width="9.43" height="11" viewBox="0 0 1536 1792" style="overflow:visible;margin:5.5px auto 0"><path fill="#fff" stroke="#fff" stroke-width="0" stroke-linejoin="round" d="M363 1536l91-91-235-235-91 91v107h128v128h107zm523-928q0-22-22-22-10 0-17 7l-542 542q-7 7-7 17 0 22 22 22 10 0 17-7l542-542q7-7 7-17zm-54-192l416 416-832 832h-416v-416zm683 96q0 53-37 90l-166 166-416-416 166-165q36-38 90-38 53 0 91 38l235 234q37 39 37 91z"/></svg></b><b style="left:54px;width:21px;background:#e74c3c"><svg width="8.64" height="11" viewBox="0 0 1408 1792" style="overflow:visible;margin:5.5px auto 0"><path fill="#fff" stroke="#fff" stroke-width="0" stroke-linejoin="round" d="M512 1376v-704q0-14-9-23t-23-9h-64q-14 0-23 9t-9 23v704q0 14 9 23t23 9h64q14 0 23-9t9-23zm256 0v-704q0-14-9-23t-23-9h-64q-14 0-23 9t-9 23v704q0 14 9 23t23 9h64q14 0 23-9t9-23zm256 0v-704q0-14-9-23t-23-9h-64q-14 0-23 9t-9 23v704q0 14 9 23t23 9h64q14 0 23-9t9-23zm-544-992h448l-48-117q-7-9-17-11h-317q-10 2-17 11zm928 32v64q0 14-9 23t-23 9h-96v948q0 83-47 143.5t-113 60.5h-832q-66 0-113-58.5t-47-141.5v-952h-96q-14 0-23-9t-9-23v-64q0-14 9-23t23-9h309l70-167q15-37 54-63t79-26h320q40 0 79 26t54 63l70 167h309q14 0 23 9t9 23z"/></svg></b></span></td></tr>
</table>
<div id="foot">显示第 1 到第 7 条记录<span style="position:relative;left:-4px">，</span>总共 7 条记录</div>
</body>
</html>
